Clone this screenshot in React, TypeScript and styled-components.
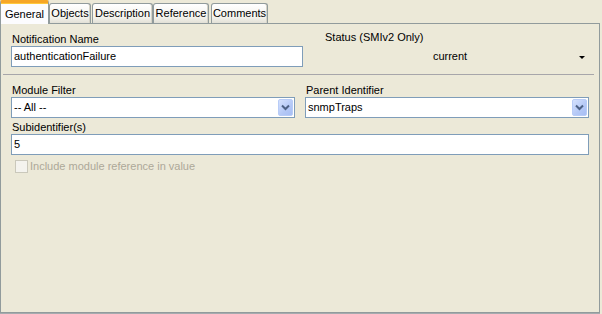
import React from 'react'
import styled, { createGlobalStyle, css } from 'styled-components'

const GlobalStyle = createGlobalStyle`
    html, body {
        margin: 0;
        padding: 0;
        background: #ECE9D8;
    }
    body {
        font-family: "Liberation Sans", Arial, sans-serif;
        font-size: 11px;
        color: #000;
    }
`

const Window = styled.div`
    width: 602px;
    height: 314px;
    box-sizing: border-box;
    padding-right: 2px;
    background: #ECE9D8;
    display: flex;
    flex-direction: column;
`

const TabStrip = styled.div`
    display: flex;
    align-items: flex-end;
    height: 23px;
    position: relative;
    z-index: 1;
`

const Tab = styled.div<{ $active?: boolean, $gap: number, $width: number }>`
    box-sizing: border-box;
    width: ${ p => p.$width }px;
    height: 20px;
    margin-left: ${ p => p.$gap }px;
    display: flex;
    align-items: center;
    justify-content: center;
    border: 1px solid #919B9C;
    border-bottom: none;
    border-radius: 3px 3px 0 0;
    background: linear-gradient(#FFFFFF, #F3F2EC 70%, #E2E0D6);
    box-shadow: inset -1px 0 0 #D6D3C6;
    line-height: 13px;
    white-space: nowrap;
    ${ p => p.$active && css`
        height: 24px;
        margin-bottom: -1px;
        padding-top: 1px;
        border-top: 3px solid #F6A627;
        background: #FCFCFE;
        box-shadow: inset 0 1px 0 #FFC83C;
        border-radius: 2px 2px 0 0;
    ` }
`

const Panel = styled.div`
    box-sizing: border-box;
    width: 600px;
    height: 290px;
    border: 1px solid #919B9C;
    box-shadow: 0 1px 0 #A5ABAE;
    padding: 9px 10px 0 10px;
    display: flex;
    flex-direction: column;
`

const TopRow = styled.div`
    display: grid;
    grid-template-columns: 292px 1fr;
    column-gap: 2px;
`

const TwoColumns = styled.div`
    display: grid;
    grid-template-columns: 1fr 1fr;
    column-gap: 10px;
`

const Field = styled.div<{ $shift?: number }>`
    display: flex;
    flex-direction: column;
    margin-top: ${ p => p.$shift ?? 0 }px;
`

const Label = styled.div<{ $indent?: number }>`
    height: 13px;
    line-height: 13px;
    padding-left: ${ p => p.$indent ?? 1 }px;
    white-space: nowrap;
`

const TextBox = styled.div`
    box-sizing: border-box;
    height: 21px;
    border: 1px solid #7F9DB9;
    background: #FFFFFF;
    padding-left: 2px;
    display: flex;
    align-items: center;
    line-height: 13px;
`

const ComboBox = styled(TextBox)`
    justify-content: space-between;
    padding-right: 1px;
`

const ComboButton = styled.div`
    box-sizing: border-box;
    width: 15px;
    height: 17px;
    border: 1px solid #B8CCF7;
    border-radius: 2px;
    background: linear-gradient(135deg, #D5E1FD, #B4C8F6 60%, #A7BEF4);
    display: flex;
    align-items: center;
    justify-content: center;
`

const FlatCombo = styled.div`
    height: 21px;
    margin-top: 2px;
    display: grid;
    grid-template-columns: 1fr auto;
    align-items: center;
    line-height: 13px;
`

const FlatValue = styled.div`
    text-align: center;
    padding-left: 16px;
`

const FlatArrow = styled.div`
    width: 0;
    height: 0;
    margin: 1px 4px 0 0;
    border-left: 3px solid transparent;
    border-right: 3px solid transparent;
    border-top: 3px solid #000;
`

const Separator = styled.div`
    height: 1px;
    margin: 7px -5px 9px -8px;
    background: #A7A6AA;
`

const CheckRow = styled.div`
    display: flex;
    align-items: center;
    gap: 2px;
    margin-top: 5px;
    padding-left: 4px;
    color: #ACA899;
    line-height: 13px;
`

const CheckBox = styled.div`
    box-sizing: border-box;
    width: 13px;
    height: 13px;
    border: 1px solid #CAC8BB;
    background: #F4F3EE;
`

const Chevron = () => (
    <svg width="9" height="7" viewBox="0 0 9 7">
        <path d="M1 1.5 L4.5 5 L8 1.5" fill="none" stroke="#4D6185" strokeWidth="2" />
    </svg>
)

const tabs = [
    { title: 'General', width: 49, gap: 0 },
    { title: 'Objects', width: 42, gap: 0 },
    { title: 'Description', width: 61, gap: 1 },
    { title: 'Reference', width: 56, gap: 0 },
    { title: 'Comments', width: 57, gap: 2 },
]

export default function App() {
    return (
        <Window>
            <GlobalStyle />
            <TabStrip>
                {tabs.map((t, i) => (
                    <Tab key={t.title} $active={i === 0} $gap={t.gap} $width={t.width}>{t.title}</Tab>
                ))}
            </TabStrip>
            <Panel>
                <TopRow>
                    <Field>
                        <Label>Notification Name</Label>
                        <TextBox>authenticationFailure</TextBox>
                    </Field>
                    <Field $shift={-2}>
                        <Label $indent={20}>Status (SMIv2 Only)</Label>
                        <FlatCombo>
                            <FlatValue>current</FlatValue>
                            <FlatArrow />
                        </FlatCombo>
                    </Field>
                </TopRow>
                <Separator />
                <TwoColumns>
                    <Field>
                        <Label>Module Filter</Label>
                        <ComboBox>
                            <span>-- All --</span>
                            <ComboButton><Chevron /></ComboButton>
                        </ComboBox>
                    </Field>
                    <Field>
                        <Label>Parent Identifier</Label>
                        <ComboBox>
                            <span>snmpTraps</span>
                            <ComboButton><Chevron /></ComboButton>
                        </ComboBox>
                    </Field>
                </TwoColumns>
                <Field $shift={3}>
                    <Label>Subidentifier(s)</Label>
                    <TextBox>5</TextBox>
                </Field>
                <CheckRow>
                    <CheckBox />
                    <span>Include module reference in value</span>
                </CheckRow>
            </Panel>
        </Window>
    )
}
